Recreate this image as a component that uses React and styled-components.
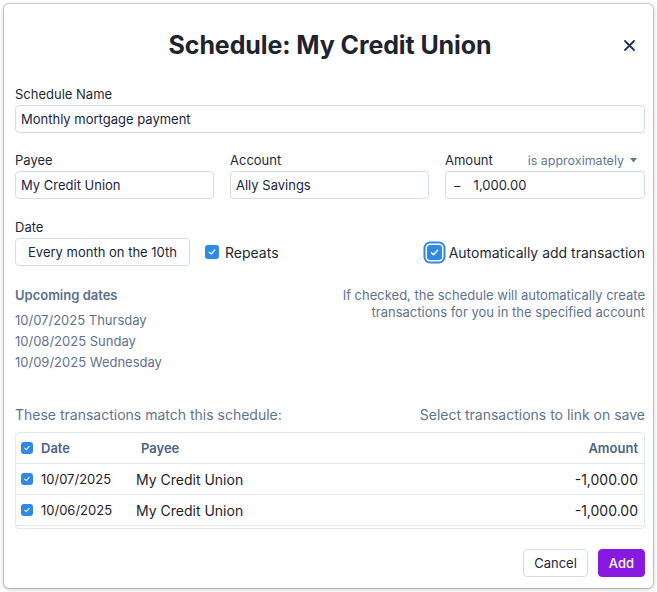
import styled, { createGlobalStyle } from "styled-components";

const GlobalStyle = createGlobalStyle`
  html, body {
    margin: 0;
    padding: 0;
    background: #ffffff;
    font-family: Inter, "Noto Sans", sans-serif;
    color: #1b2433;
  }
  * { box-sizing: border-box; }
`;

const Page = styled.div`
  padding: 4px;
  width: 657px;
`;

const Modal = styled.div`
  width: 649px;
  height: 584px;
  background: #fff;
  border-radius: 5px;
  box-shadow: 0 0 0 1px rgba(0, 0, 0, 0.16), 0 1px 5px rgba(0, 0, 0, 0.25);
  padding: 0 8px 0 11px;
  display: flex;
  flex-direction: column;
`;

const Header = styled.div`
  position: relative;
  height: 82px;
  display: flex;
  align-items: center;
  justify-content: center;
`;

const Title = styled.h1`
  margin: 0;
  font-size: 25px;
  font-weight: 700;
  color: #1f2330;
  letter-spacing: -0.1px;
`;

const Close = styled.button`
  position: absolute;
  right: 8px;
  top: 33px;
  width: 16px;
  height: 16px;
  padding: 0;
  border: 0;
  background: none;
  display: flex;
  align-items: center;
  justify-content: center;
`;

const Field = styled.div`
  display: flex;
  flex-direction: column;
  gap: 3px;
  margin-top: ${(p) => p.$mt || 0}px;
`;

const LabelRow = styled.div`
  display: flex;
  justify-content: space-between;
  align-items: center;
  height: 16px;
`;

const Label = styled.label`
  font-size: 13px;
  color: #1f2937;
`;

const Approx = styled.span`
  font-size: 12.5px;
  color: #5f7a96;
  display: flex;
  align-items: center;
  gap: 6px;
  padding-right: 8px;
`;

const Input = styled.div`
  height: 28px;
  border: 1px solid #d3dde9;
  border-radius: 4px;
  padding: 0 ${(p) => (p.$pad ? p.$pad : 5)}px;
  display: flex;
  align-items: center;
  gap: 12px;
  font-size: 13px;
  color: #1b2540;
`;

const Row3 = styled.div`
  display: grid;
  grid-template-columns: 199px 199px 1fr;
  gap: 16px;
  margin-top: 19px;
`;

const DateRow = styled.div`
  display: flex;
  align-items: center;
`;

const DateButton = styled.div`
  width: 175px;
  height: 28px;
  border: 1px solid #d3dde9;
  border-radius: 4px;
  display: flex;
  align-items: center;
  justify-content: center;
  font-size: 13px;
  color: #1b2540;
`;

const CheckLabel = styled.div`
  display: flex;
  align-items: center;
  gap: ${(p) => p.$gap || 6}px;
  font-size: 14px;
  color: #1f2937;
  margin-left: ${(p) => p.$ml || 0}px;
`;

const Box = styled.span`
  width: ${(p) => p.$size}px;
  height: ${(p) => p.$size}px;
  border-radius: 3px;
  background: #2e8ae6;
  display: inline-flex;
  align-items: center;
  justify-content: center;
  flex-shrink: 0;
  box-shadow: ${(p) => (p.$focus ? "0 0 0 1.5px #fff, 0 0 0 3.5px #2e8ae6" : "none")};
`;

const InfoRow = styled.div`
  display: flex;
  justify-content: space-between;
  margin-top: 21px;
  height: 108px;
`;

const Upcoming = styled.div`
  display: flex;
  flex-direction: column;
`;

const UpTitle = styled.div`
  font-size: 13px;
  font-weight: 600;
  color: #5a718c;
  line-height: 17px;
  margin-bottom: 6px;
`;

const UpDate = styled.div`
  font-size: 13px;
  color: #5f7390;
  line-height: 21px;
`;

const Hint = styled.div`
  font-size: 13px;
  color: #5f7390;
  text-align: right;
  line-height: 17px;
`;

const MatchRow = styled.div`
  display: flex;
  justify-content: space-between;
  font-size: 14px;
  color: #5f7390;
  margin-top: 11px;
`;

const Table = styled.div`
  margin-top: 9px;
  border: 1px solid #e2e8f0;
  border-radius: 4px;
  height: 97px;
  overflow: hidden;
`;

const TRow = styled.div`
  display: grid;
  grid-template-columns: 20px ${(p) => (p.$head ? 100 : 95)}px 1fr auto;
  align-items: center;
  height: 31px;
  padding: 0 6px 0 5px;
  border-bottom: 1px solid #e4e9f0;
  font-size: ${(p) => (p.$head ? 13 : 14)}px;
  font-weight: ${(p) => (p.$head ? 600 : 400)};
  color: ${(p) => (p.$head ? "#4c6584" : "#1f2229")};
`;

const DateCell = styled.span`
  font-size: 13px;
`;

const Footer = styled.div`
  margin-top: auto;
  margin-bottom: 11px;
  display: flex;
  justify-content: flex-end;
  gap: 10px;
`;

const Button = styled.button`
  height: 28px;
  padding: 0 10px;
  border-radius: 4px;
  font-family: inherit;
  font-size: 13px;
  border: 1px solid ${(p) => (p.$primary ? "#8719e0" : "#d3dde9")};
  background: ${(p) => (p.$primary ? "#8719e0" : "#fff")};
  color: ${(p) => (p.$primary ? "#fff" : "#1f2937")};
  font-weight: ${(p) => (p.$primary ? 500 : 400)};
`;

const Check = ({ size = 14, focus }) => (
  <Box $size={size} $focus={focus}>
    <svg width={size - 4} height={size - 4} viewBox="0 0 10 10">
      <path d="M2.2 5.2 L4.2 7 L7.8 3" fill="none" stroke="#fff" strokeWidth="1.3" strokeLinecap="round" strokeLinejoin="round" />
    </svg>
  </Box>
);

const rows = [
  { date: "10/07/2025", payee: "My Credit Union", amount: "-1,000.00" },
  { date: "10/06/2025", payee: "My Credit Union", amount: "-1,000.00" },
];

export default function App() {
  return (
    <Page>
      <GlobalStyle />
      <Modal>
        <Header>
          <Title>Schedule: My Credit Union</Title>
          <Close>
            <svg width="11" height="11" viewBox="0 0 11 11">
              <path d="M1 1 L10 10 M10 1 L1 10" stroke="#1d3557" strokeWidth="1.8" strokeLinecap="round" />
            </svg>
          </Close>
        </Header>

        <Field>
          <LabelRow>
            <Label>Schedule Name</Label>
          </LabelRow>
          <Input>Monthly mortgage payment</Input>
        </Field>

        <Row3>
          <Field>
            <LabelRow>
              <Label>Payee</Label>
            </LabelRow>
            <Input>My Credit Union</Input>
          </Field>
          <Field>
            <LabelRow>
              <Label>Account</Label>
            </LabelRow>
            <Input>Ally Savings</Input>
          </Field>
          <Field>
            <LabelRow>
              <Label>Amount</Label>
              <Approx>
                is approximately
                <svg width="7" height="5" viewBox="0 0 7 5">
                  <path d="M0 0 H7 L3.5 4.5 Z" fill="#5f7a96" />
                </svg>
              </Approx>
            </LabelRow>
            <Input $pad={7}>
              <span>−</span>
              <span>1,000.00</span>
            </Input>
          </Field>
        </Row3>

        <Field $mt={20}>
          <LabelRow>
            <Label>Date</Label>
          </LabelRow>
          <DateRow>
            <DateButton>Every month on the 10th</DateButton>
            <CheckLabel $ml={15}>
              <Check size={14} />
              Repeats
            </CheckLabel>
            <CheckLabel $gap={7} style={{ marginLeft: "auto" }}>
              <Check size={15} focus />
              Automatically add transaction
            </CheckLabel>
          </DateRow>
        </Field>

        <InfoRow>
          <Upcoming>
            <UpTitle>Upcoming dates</UpTitle>
            <UpDate>10/07/2025 Thursday</UpDate>
            <UpDate>10/08/2025 Sunday</UpDate>
            <UpDate>10/09/2025 Wednesday</UpDate>
          </Upcoming>
          <Hint>
            If checked, the schedule will automatically create
            <br />
            transactions for you in the specified account
          </Hint>
        </InfoRow>

        <MatchRow>
          <span>These transactions match this schedule:</span>
          <span>Select transactions to link on save</span>
        </MatchRow>

        <Table>
          <TRow $head>
            <Check size={12} />
            <span>Date</span>
            <span>Payee</span>
            <span>Amount</span>
          </TRow>
          {rows.map((r) => (
            <TRow key={r.date}>
              <Check size={12} />
              <DateCell>{r.date}</DateCell>
              <span>{r.payee}</span>
              <span>{r.amount}</span>
            </TRow>
          ))}
        </Table>

        <Footer>
          <Button>Cancel</Button>
          <Button $primary>Add</Button>
        </Footer>
      </Modal>
    </Page>
  );
}
